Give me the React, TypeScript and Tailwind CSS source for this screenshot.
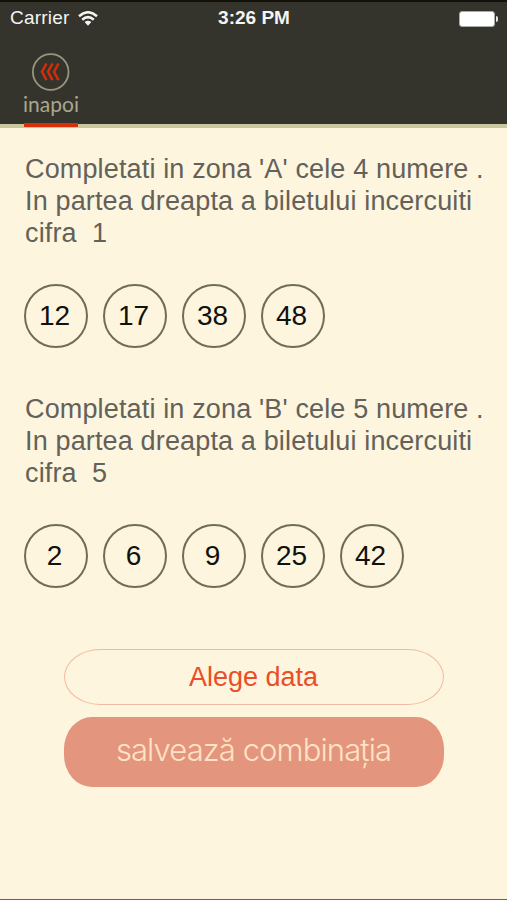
function Ball({ value }: { value: number }) {
  return (
    <div className="flex h-[64px] w-[64px] items-center justify-center rounded-full border-2 border-[#6f6d5a] pr-[3px] text-[28px] leading-none text-[#11110d]">
      {value}
    </div>
  );
}

function Zone({ lines, numbers }: { lines: string[]; numbers: number[] }) {
  return (
    <section className="h-[240px]">
      <div className="text-[27px] leading-[32px] tracking-[0.15px] text-[#62615a]">
        {lines.map((line) => (
          <p key={line} className="whitespace-pre">
            {line}
          </p>
        ))}
      </div>
      <div className="mt-[35px] -ml-px flex gap-[15px]">
        {numbers.map((n) => (
          <Ball key={n} value={n} />
        ))}
      </div>
    </section>
  );
}

export default function App() {
  return (
    <div className="flex h-[900px] w-[507px] flex-col overflow-hidden border-b border-[#66644f] bg-[#fef5de] font-['Liberation_Sans',sans-serif]">
      <header className="h-[128px] border-t-2 border-b-4 border-t-[#12120a] border-b-[#c9c79f] bg-[#34342d]">
        <div className="grid h-[33px] grid-cols-3 items-center pr-[9px] pl-[10px] text-[19px] text-[#f4f4f1]">
          <div className="flex items-center gap-[9px]">
            <span className="tracking-[0.2px]">Carrier</span>
            <svg width="20" height="15" viewBox="0 0 20 15" fill="none" stroke="currentColor" strokeWidth="2.5">
              <path d="M1 5.3Q10-2.8 19 5.3M4.2 8.7Q10 3.6 15.8 8.7" />
              <path d="M6.6 11.1Q10 8.2 13.4 11.1L10 14.7Z" fill="currentColor" stroke="none" />
            </svg>
          </div>
          <span className="text-center text-[19px] font-bold whitespace-nowrap">3:26 PM</span>
          <div className="flex items-center justify-end gap-px">
            <div className="h-[16px] w-[36px] rounded-[3px] border border-[#aaa9a4] bg-white" />
            <div className="h-[6px] w-[2px] rounded-r-full bg-[#e4e4df]" />
          </div>
        </div>
        <div className="ml-[24px] flex h-[93px] w-[54px] flex-col items-center pt-[18px]">
          <svg width="38" height="38" viewBox="0 0 38 38" fill="none">
            <circle cx="18.7" cy="19" r="17.8" stroke="#97967b" strokeWidth="1.8" />
            <path d="M14.5 10.5l-4.5 8.3 4.5 8.3M20.5 10.5l-4.5 8.3 4.5 8.3M26.5 10.5l-4.5 8.3 4.5 8.3" stroke="#d52c09" strokeWidth="2.5" />
          </svg>
          <span className="mt-px font-['Lato',sans-serif] text-[21px] leading-[24px] text-[#aaa78c]">inapoi</span>
          <div className="mt-[7px] h-[4px] w-[54px] shrink-0 bg-[#d82f08]" />
        </div>
      </header>
      <main className="pt-[25px] pl-[25px]">
        <Zone
          lines={[
            "Completati in zona 'A' cele 4 numere .",
            "In partea dreapta a biletului incercuiti",
            "cifra  1",
          ]}
          numbers={[12, 17, 38, 48]}
        />
        <Zone
          lines={[
            "Completati in zona 'B' cele 5 numere .",
            "In partea dreapta a biletului incercuiti",
            "cifra  5",
          ]}
          numbers={[2, 6, 9, 25, 42]}
        />
      </main>
      <div className="mt-[16px] ml-[64px] flex w-[380px] flex-col gap-[12px]">
        <button className="h-[56px] rounded-[36px/28px] border-[1.5px] border-[#f3baa2] pr-px text-[27px] leading-none text-[#eb4d29]">
          Alege data
        </button>
        <button className="h-[70px] rounded-[28px/32px] bg-[#e3957e] pr-px pb-[5px] font-['Inter',sans-serif] text-[31px] leading-none font-light tracking-[-0.9px] whitespace-nowrap text-[#ffe3c5]">
          salvează combinația
        </button>
      </div>
    </div>
  );
}
